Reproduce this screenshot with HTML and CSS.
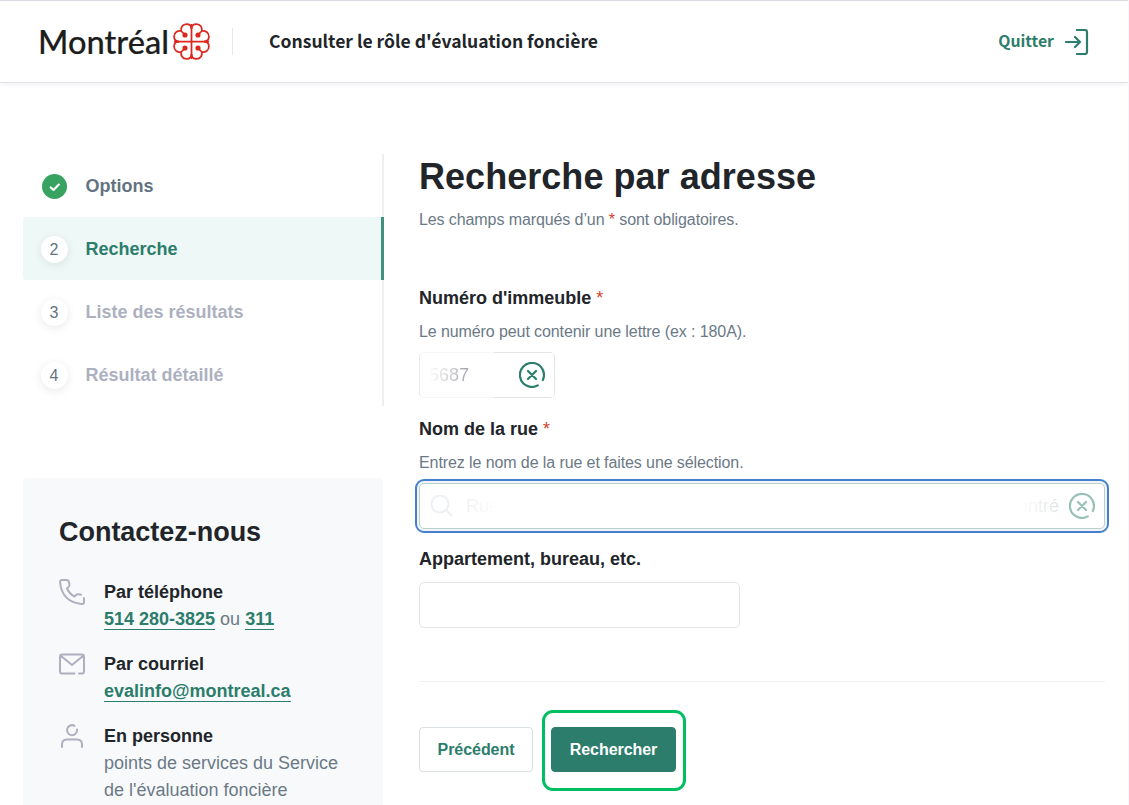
FILE: index.html
```html
<!DOCTYPE html>
<html lang="fr">
<head>
<meta charset="utf-8">
<title>Consulter le rôle d'évaluation foncière</title>
<link rel="stylesheet" href="styles.css">
</head>
<body>
<header class="topbar">
  <svg class="logo" width="172" height="42" viewBox="0 0 172 42" role="img" aria-label="Montréal">
    <text class="logo-text" x="-1" y="33" textLength="131" lengthAdjust="spacingAndGlyphs">Montréal</text>
    <g transform="translate(152.5 20.5)" fill="none" stroke="#dc281e" stroke-width="1.75">
      <path d="M0-17.5V17.5M-17.5 0H17.5"/>
      <g id="petal"><path d="M0-12.500C0-16-2-17.400-5-17.400C-9-17.400-11-14-10.300-10.500C-14-11-17.400-9-17.400-5C-17.400-2-16 0-12.500 0M-10.300-10.500L-6.500-6.700"/><circle cx="-6.500" cy="-6.500" r="1.700" fill="#dc281e"/></g>
      <use href="#petal" transform="scale(-1 1)"/>
      <use href="#petal" transform="scale(1 -1)"/>
      <use href="#petal" transform="scale(-1 -1)"/>
    </g>
  </svg>
  <span class="divider"></span>
  <span class="app-name">Consulter le rôle d'évaluation foncière</span>
  <a class="quit"><span class="quit-text">Quitter</span>
    <svg width="24" height="26" viewBox="0 0 24 26" fill="none" stroke="#2c7d6b" stroke-width="2.2" stroke-linecap="round" stroke-linejoin="round"><path d="M12 1H20Q22 1 22 3V23Q22 25 20 25H12M1 13H15M10 8L15 13L10 18"/></svg>
  </a>
</header>
<div class="page">
  <aside class="side">
    <ol class="steps">
      <li class="step done"><span class="dot"><svg width="26" height="26" viewBox="0 0 26 26" fill="none" stroke="#fff" stroke-width="2.2" stroke-linecap="round" stroke-linejoin="round"><path d="M9 13.500L12 16L17.500 10.500"/></svg></span><span>Options</span></li>
      <li class="step active"><span class="dot">2</span><span>Recherche</span></li>
      <li class="step"><span class="dot">3</span><span>Liste des résultats</span></li>
      <li class="step"><span class="dot">4</span><span>Résultat détaillé</span></li>
    </ol>
    <section class="contact">
      <h2>Contactez-nous</h2>
      <div class="way">
        <svg class="way-icon" viewBox="0 0 26 26"><path d="M1 3Q1 1 3 1H7.500Q9.500 1 10 3.500L10.500 6Q10.500 7.500 9 8.500L8 9.500Q10.500 15 15.500 17.500L17 16Q18 15 19.500 15.200L22 15.800M25 19V23Q25 25.200 22.500 25Q3 23 1 3"/></svg>
        <div><b>Par téléphone</b><p><a>514 280-3825</a> ou <a>311</a></p></div>
      </div>
      <div class="way">
        <svg class="way-icon" viewBox="0 0 26 26"><path d="M15.500 22.500H3Q1 22.500 1 20.500V5.500Q1 3.500 3 3.500H23Q25 3.500 25 5.500V20.500Q25 22.500 23 22.500H20M1.500 4.500L13 14L24.500 4.500"/></svg>
        <div><b>Par courriel</b><p><a>evalinfo@montreal.ca</a></p></div>
      </div>
      <div class="way">
        <svg class="way-icon" viewBox="0 0 26 26"><path d="M15.500 2.800A5 5 0 1 0 18 6.500M3 24V21.500Q3 16.500 8 16.500H18Q23 16.500 23 21.500V24"/></svg>
        <div><b>En personne</b><p>points de services du Service<br>de l'évaluation foncière</p></div>
      </div>
    </section>
  </aside>
  <main class="main">
    <h1>Recherche par adresse</h1>
    <p class="hint intro">Les champs marqués d’un <i>*</i> sont obligatoires.</p>
    <label class="label">Numéro d'immeuble <i>*</i></label>
    <p class="hint help">Le numéro peut contenir une lettre (ex : 180A).</p>
    <div class="input number"><span class="number-value">5687</span>
      <svg class="clear" viewBox="0 0 26 26"><path d="M18.800 23.400A12 12 0 1 1 23.800 18M9 9L17 17M17 9L9 17"/></svg>
    </div>
    <label class="label">Nom de la rue <i>*</i></label>
    <p class="hint help">Entrez le nom de la rue et faites une sélection.</p>
    <div class="input street">
      <svg class="search" viewBox="0 0 24 24"><circle cx="10" cy="10" r="8.500"/><path d="M16.500 16.500L22 22"/></svg>
      <span class="street-start">Rue</span><span class="street-end">Contré</span>
      <svg class="clear faded" viewBox="0 0 26 26"><path d="M18.800 23.400A12 12 0 1 1 23.800 18M9 9L17 17M17 9L9 17"/></svg>
    </div>
    <label class="label">Appartement, bureau, etc.</label>
    <div class="input unit"></div>
    <div class="actions">
      <button class="btn">Précédent</button>
      <span class="highlight"><button class="btn primary">Rechercher</button></span>
    </div>
  </main>
</div>
</body>
</html>
```
FILE: styles.css
```css
* { box-sizing: border-box; }
html { background: #f7f7fd; overflow: hidden; }
body { margin: 0; width: 1128px; height: 805px; overflow: hidden; background: #fff; color: #212529; font-family: "Liberation Sans", Arial, sans-serif; }
h1, h2, p, ol { margin: 0; padding: 0; }
i { font-style: normal; color: #d3422c; }
.topbar { display: flex; align-items: center; height: 83px; padding: 0 39px 0 39px; border-top: 1px solid #dadae2; border-bottom: 1px solid #e2e4e9; box-shadow: 0 2px 5px rgba(0,0,0,.06); }
.logo { overflow: visible; flex: none; }
.logo-text { font: 500 33.5px Lato, sans-serif; fill: #1d1d1b; stroke: #1d1d1b; stroke-width: .2px; }
.divider { width: 1px; height: 27px; margin-left: 21px; background: #e6e8ec; }
.app-name { margin-left: 36px; padding-bottom: 2px; font: 700 17.550px/28px "Noto Sans CJK SC", sans-serif; }
.quit { display: flex; align-items: center; gap: 11px; margin-left: auto; color: #2c7d6b; font: 700 15.800px/28px "Noto Sans CJK SC", sans-serif; }
.quit-text { padding-bottom: 2px; }
.page { display: flex; }
.side { width: 361px; margin: 71px 35px 0 23px; flex: none; }
.steps { list-style: none; }
.step { display: flex; align-items: center; gap: 18px; height: 63px; padding: 2px 0 0 17.500px; border-right: 2px solid #eeeff1; color: #adb0bf; font-size: 18px; font-weight: 700; }
.dot { display: flex; align-items: center; justify-content: center; width: 27px; height: 27px; border-radius: 50%; background: #fff; color: #637381; font-size: 16px; font-weight: 400; box-shadow: 0 2px 8px rgba(30,50,50,.1); }
.done { color: #637381; }
.done .dot { width: 25px; height: 25px; margin: 0 1px; background: #38a360; box-shadow: none; }
.active { border-right: 3px solid #44907f; border-radius: 4px 0 0 4px; background: #eef8f7; color: #2c7d6b; }
.contact { width: 360px; height: 360px; margin-top: 72px; padding: 36px 36px 0; background: #f8f9fb; border-radius: 4px; }
h2 { margin-bottom: 28px; font-size: 27px; line-height: 37px; letter-spacing: -.03px; }
.way { display: flex; gap: 19px; margin-bottom: 18px; font-size: 18px; line-height: 27px; color: #6b7986; }
.way b { display: block; color: #212529; }
.way a { color: #2c7d6b; font-weight: 700; border-bottom: 1.500px solid #2c7d6b; }
.way-icon { width: 26px; height: 26px; fill: none; stroke: #adb0bf; stroke-width: 2; stroke-linecap: round; stroke-linejoin: round; flex: none; }
.main { width: 686px; padding-top: 71px; }
h1 { font-size: 36px; line-height: 46px; letter-spacing: .040px; }
.hint { color: #6b7986; font-size: 16px; line-height: 24px; letter-spacing: -.095px; }
.intro { margin: 8px 0 53px; }
.label { display: block; font-size: 18px; line-height: 27px; font-weight: 700; }
.label i { font-weight: 400; }
.help { margin: 8px 0; }
.input { display: flex; align-items: center; height: 46px; border: 1px solid #e2e4e8; border-radius: 5px; color: #637381; font-size: 18px; }
.number { width: 136px; padding: 0 9px; justify-content: space-between; margin-bottom: 18px; border-color: transparent #e2e4e8 transparent #e8eaee; background: linear-gradient(90deg, #f5f6f8 75px, #e2e4e8 75px) top / 100% 1px no-repeat, linear-gradient(90deg, #f5f6f8 75px, #e2e4e8 75px) bottom / 100% 1px no-repeat; background-origin: border-box; }
.number-value { background: linear-gradient(90deg, #fff, #9fa1a8); background-clip: text; color: transparent; }
.clear { width: 26px; height: 26px; fill: none; stroke: #2c7d6b; stroke-width: 2.200; stroke-linecap: round; flex: none; }
.faded { opacity: .48; }
.street { padding: 0 9px 0 10px; border-color: #b9d0cb; outline: 2px solid #4480cd; outline-offset: 2px; box-shadow: 0 0 0 2px #f1f5fa; margin-bottom: 17px; }
.search { width: 24px; height: 24px; fill: none; stroke: #edf0f2; stroke-width: 2; }
.street-start { margin-left: 12px; background: linear-gradient(90deg, #eff0f2, #fff); background-clip: text; color: transparent; }
.street-end { margin: 0 10px 0 auto; background: linear-gradient(90deg, #fff 25%, #dfe2e4); background-clip: text; color: transparent; }
.unit { width: 321px; margin-top: 9px; }
.actions { display: flex; align-items: flex-start; gap: 9px; margin-top: 53px; padding-top: 28px; border-top: 1px solid #eeeff2; }
.btn { height: 45px; width: 114px; margin-top: 17px; padding: 0; border: 1px solid #dadfe4; border-radius: 4px; background: #fff; color: #2c7d6b; font: 700 16px "Liberation Sans", Arial, sans-serif; letter-spacing: -.05px; }
.highlight { display: block; width: 144px; height: 81px; padding: 14px 6px; border: 3px solid #00bf63; border-radius: 11px; }
.primary { width: 125px; margin: 0; border-color: #2c7d6b; background: #2c7d6b; color: #fff; }
.actions > .btn { margin-top: 17px; }
```
